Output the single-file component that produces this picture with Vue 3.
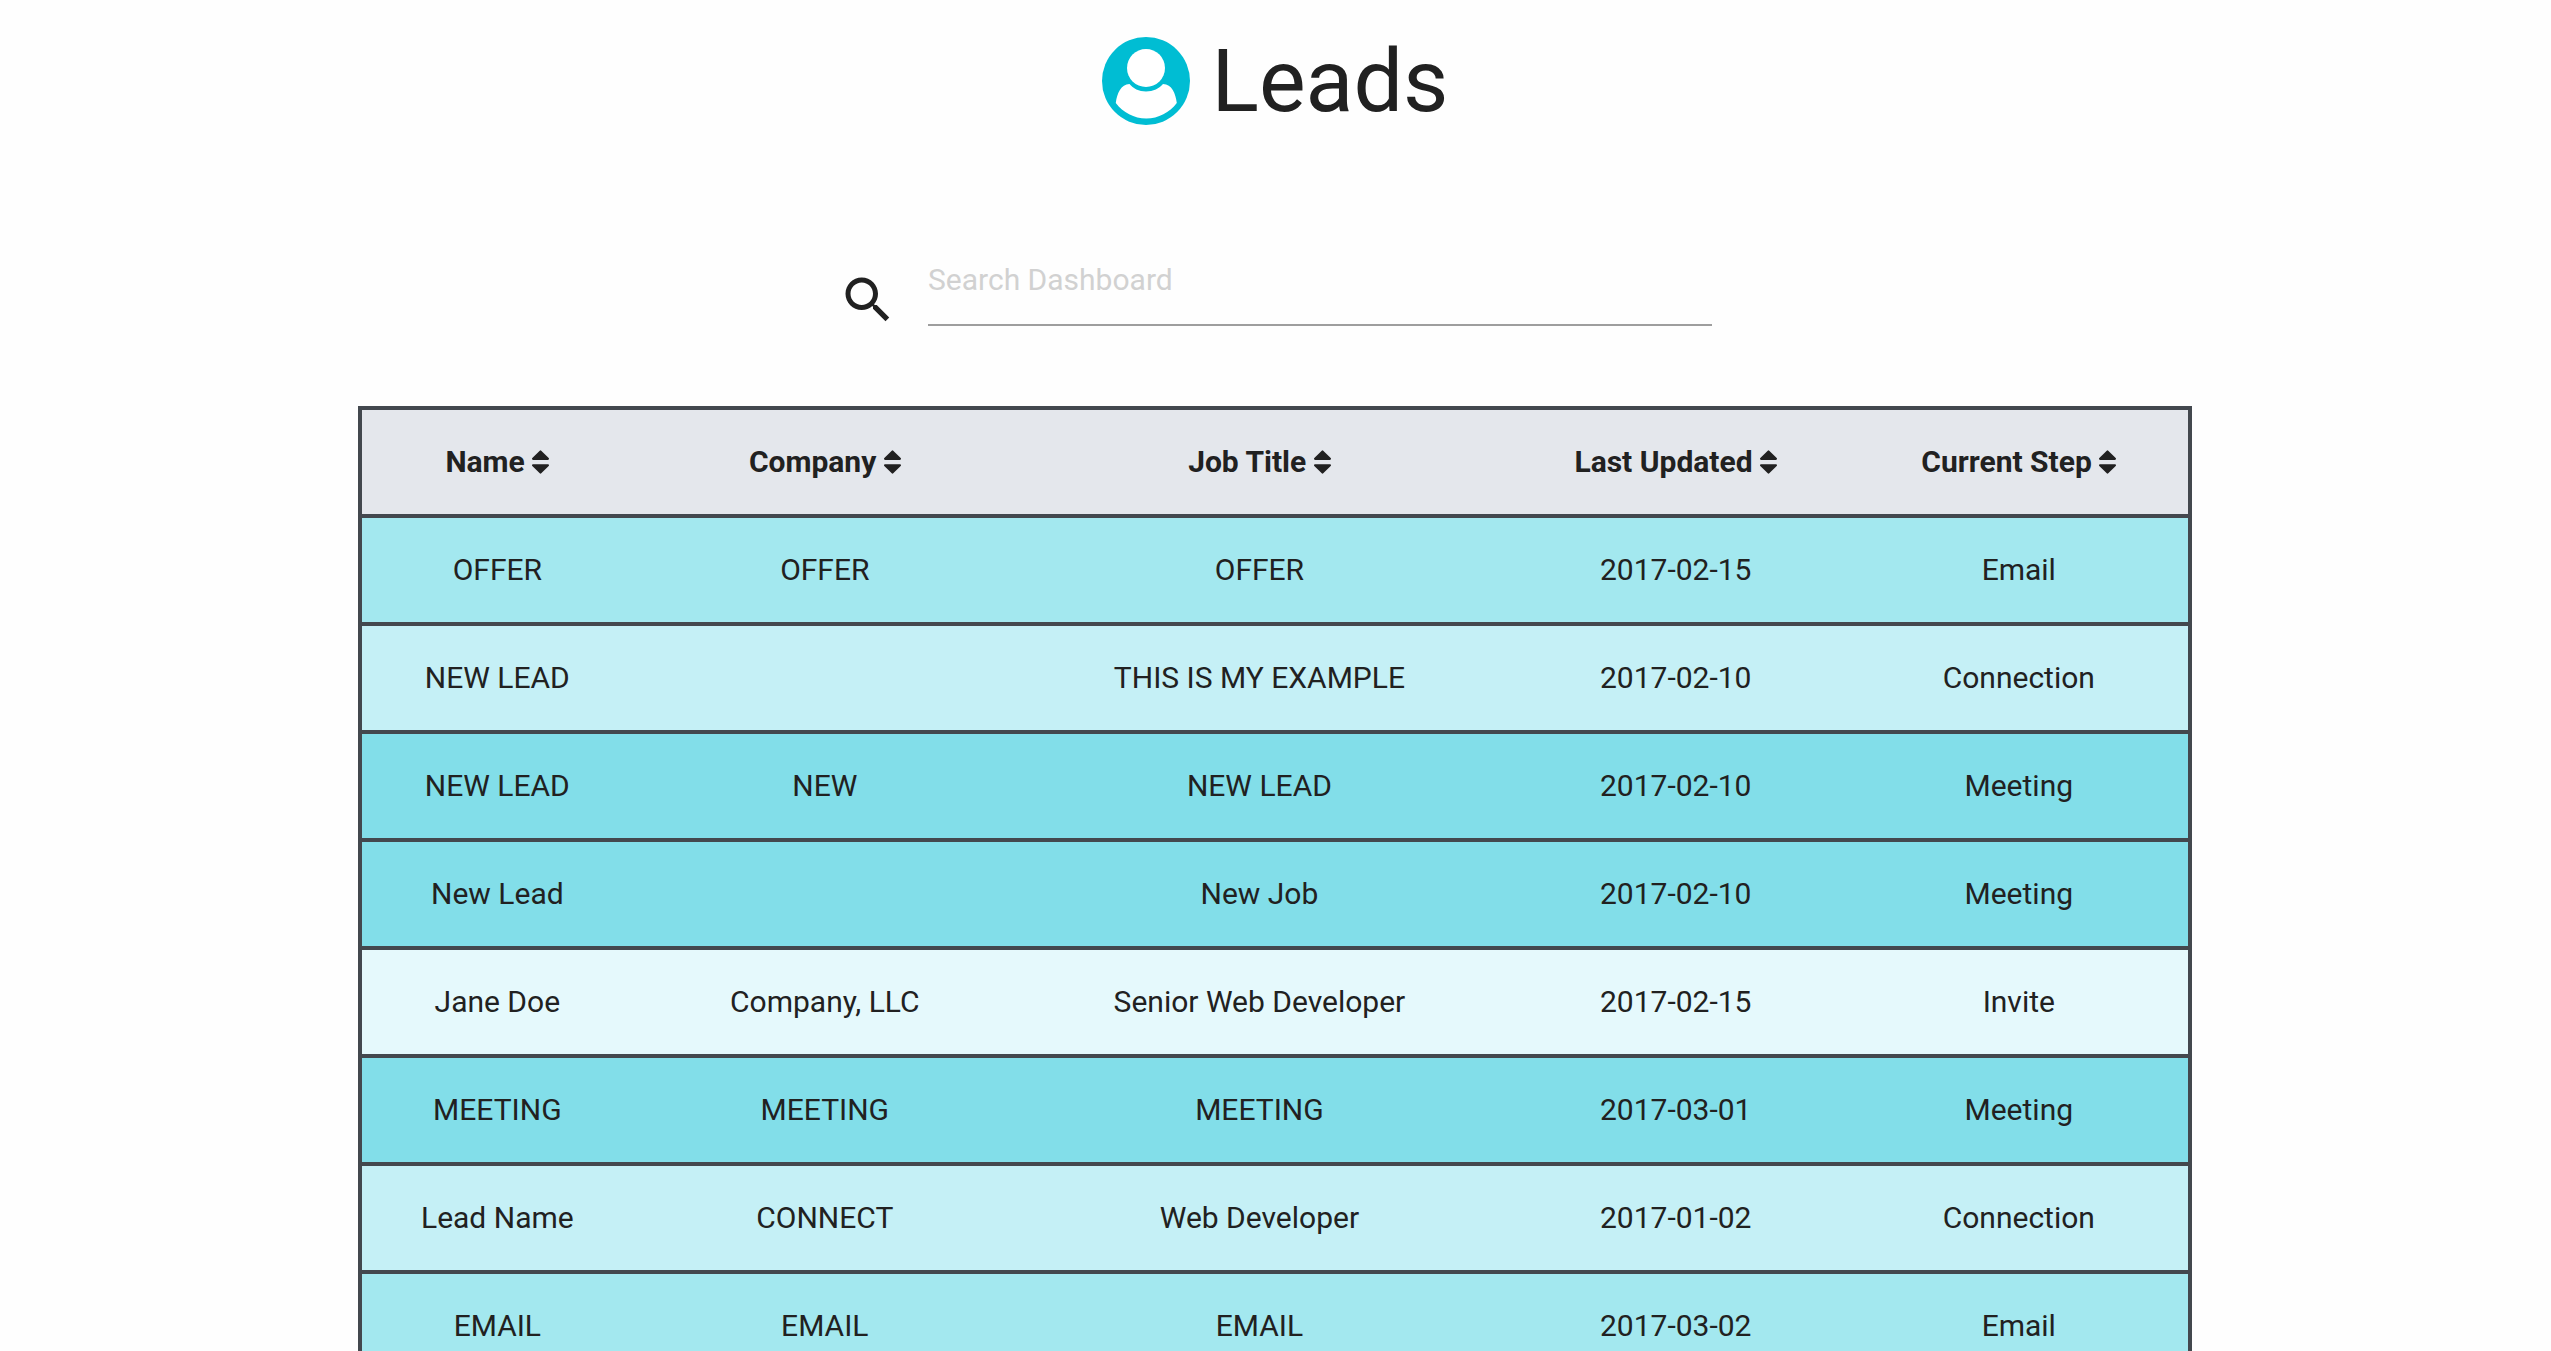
<script setup>
import { computed, ref } from 'vue'

const columns = [
  { key: 'name', label: 'Name', width: '14.9%' },
  { key: 'company', label: 'Company', width: '21%' },
  { key: 'title', label: 'Job Title', width: '26.5%' },
  { key: 'updated', label: 'Last Updated', width: '19%' },
  { key: 'step', label: 'Current Step', width: '18.6%' },
]

const leads = [
  { name: 'OFFER', company: 'OFFER', title: 'OFFER', updated: '2017-02-15', step: 'Email' },
  { name: 'NEW LEAD', company: '', title: 'THIS IS MY EXAMPLE', updated: '2017-02-10', step: 'Connection' },
  { name: 'NEW LEAD', company: 'NEW', title: 'NEW LEAD', updated: '2017-02-10', step: 'Meeting' },
  { name: 'New Lead', company: '', title: 'New Job', updated: '2017-02-10', step: 'Meeting' },
  { name: 'Jane Doe', company: 'Company, LLC', title: 'Senior Web Developer', updated: '2017-02-15', step: 'Invite' },
  { name: 'MEETING', company: 'MEETING', title: 'MEETING', updated: '2017-03-01', step: 'Meeting' },
  { name: 'Lead Name', company: 'CONNECT', title: 'Web Developer', updated: '2017-01-02', step: 'Connection' },
  { name: 'EMAIL', company: 'EMAIL', title: 'EMAIL', updated: '2017-03-02', step: 'Email' },
]

const query = ref('')
const sortKey = ref('')
const ascending = ref(true)

function sortBy(key) {
  ascending.value = sortKey.value === key ? !ascending.value : true
  sortKey.value = key
}

const rows = computed(() => {
  const q = query.value.trim().toLowerCase()
  const found = leads.filter((lead) => Object.values(lead).some((v) => v.toLowerCase().includes(q)))
  if (!sortKey.value) return found
  const dir = ascending.value ? 1 : -1
  return found.sort((a, b) => dir * a[sortKey.value].localeCompare(b[sortKey.value]))
})
</script>

<template>
  <main class="page">
    <h1 class="heading">
      <svg class="avatar" viewBox="0 0 88 88" aria-hidden="true">
        <circle cx="44" cy="44" r="44" fill="#00bdd3" />
        <circle cx="44" cy="31" r="19" fill="#fff" />
        <path
          fill="#fff"
          d="M27.5 47C31 51.500 37 54.500 44 54.500S57.500 51.500 61 47C70 47.500 73.500 56 74.800 66C67.500 75.500 56.500 81.500 44.300 81.500S21 75.500 13.800 66C15 56 19 47.500 27.500 47Z"
        />
      </svg>
      <span>Leads</span>
    </h1>

    <form class="search" role="search" @submit.prevent>
      <label for="search" aria-label="Search Dashboard">
        <svg class="search-icon" viewBox="0 0 24 24" aria-hidden="true">
          <path
            d="M15.5 14h-.79l-.28-.27C15.410 12.590 16 11.110 16 9.500 16 5.910 13.090 3 9.500 3S3 5.910 3 9.500 5.910 16 9.500 16c1.610 0 3.090-.59 4.230-1.570l.27.28v.79l5 4.990L20.490 19l-4.990-5zm-6 0C7.010 14 5 11.990 5 9.500S7.010 5 9.500 5 14 7.010 14 9.500 11.990 14 9.500 14z"
          />
        </svg>
      </label>
      <input id="search" v-model="query" type="text" placeholder="Search Dashboard" />
    </form>

    <table class="leads">
      <colgroup>
        <col v-for="c in columns" :key="c.key" :style="{ width: c.width }" />
      </colgroup>
      <thead>
        <tr>
          <th v-for="c in columns" :key="c.key" scope="col">
            <button type="button" @click="sortBy(c.key)">
              {{ c.label }}
              <svg class="sort" viewBox="0 192 1024 1408" aria-hidden="true">
                <path
                  d="M1024 1088q0 26-19 45l-448 448q-19 19-45 19t-45-19l-448-448q-19-19-19-45t19-45 45-19h896q26 0 45 19t19 45zm0-384q0 26-19 45t-45 19h-896q-26 0-45-19t-19-45 19-45l448-448q19-19 45-19t45 19l448 448q19 19 19 45z"
                />
              </svg>
            </button>
          </th>
        </tr>
      </thead>
      <tbody>
        <tr v-for="(lead, i) in rows" :key="i" :class="lead.step.toLowerCase()">
          <td v-for="c in columns" :key="c.key">{{ lead[c.key] }}</td>
        </tr>
      </tbody>
    </table>
  </main>
</template>

<style>
body {
  margin: 0;
  background: #fefefe;
}
</style>

<style scoped>
.page {
  box-sizing: border-box;
  height: 100vh;
  overflow-y: auto;
  scrollbar-width: none;
  padding: 32px 359px 0 358px;
  font-family: Roboto, "Liberation Sans", sans-serif;
  font-size: 30px;
  line-height: 44px;
  color: #212121;
}

.heading {
  display: flex;
  justify-content: center;
  align-items: center;
  gap: 22px;
  margin: 0;
  font-size: 88px;
  line-height: 98px;
  font-weight: 400;
}

.avatar {
  width: 88px;
  height: 88px;
}

.search {
  display: flex;
  align-items: flex-start;
  gap: 30px;
  max-width: 874px;
  margin: 104px auto 76px;
}

.search label {
  display: flex;
  padding-top: 36px;
}

.search-icon {
  width: 60px;
  height: 60px;
  fill: #212121;
}

.search input {
  flex: 1;
  min-width: 0;
  height: 90px;
  padding: 0;
  border: 0;
  border-bottom: 2px solid #9e9e9e;
  outline: 0;
  background: transparent;
  font: inherit;
  color: inherit;
}

.search input::placeholder {
  color: #d1d1d1;
  opacity: 1;
}

.leads {
  width: 100%;
  table-layout: fixed;
  border-collapse: collapse;
  border: 4px solid #43484e;
  text-align: center;
}

.leads tr {
  border-bottom: 4px solid #43484e;
}

.leads th,
.leads td {
  height: 104px;
  padding: 0;
}

.leads th {
  background: #e4e7ec;
}

.leads button {
  padding: 0;
  border: 0;
  background: none;
  font: inherit;
  font-weight: 700;
  color: inherit;
  cursor: pointer;
}

.sort {
  width: 17px;
  height: 24px;
  vertical-align: -2px;
  fill: currentColor;
}

.email {
  background: #a3e8ef;
}

.connection {
  background: #c5f0f6;
}

.meeting {
  background: #82dee9;
}

.invite {
  background: #e5f9fc;
}
</style>
